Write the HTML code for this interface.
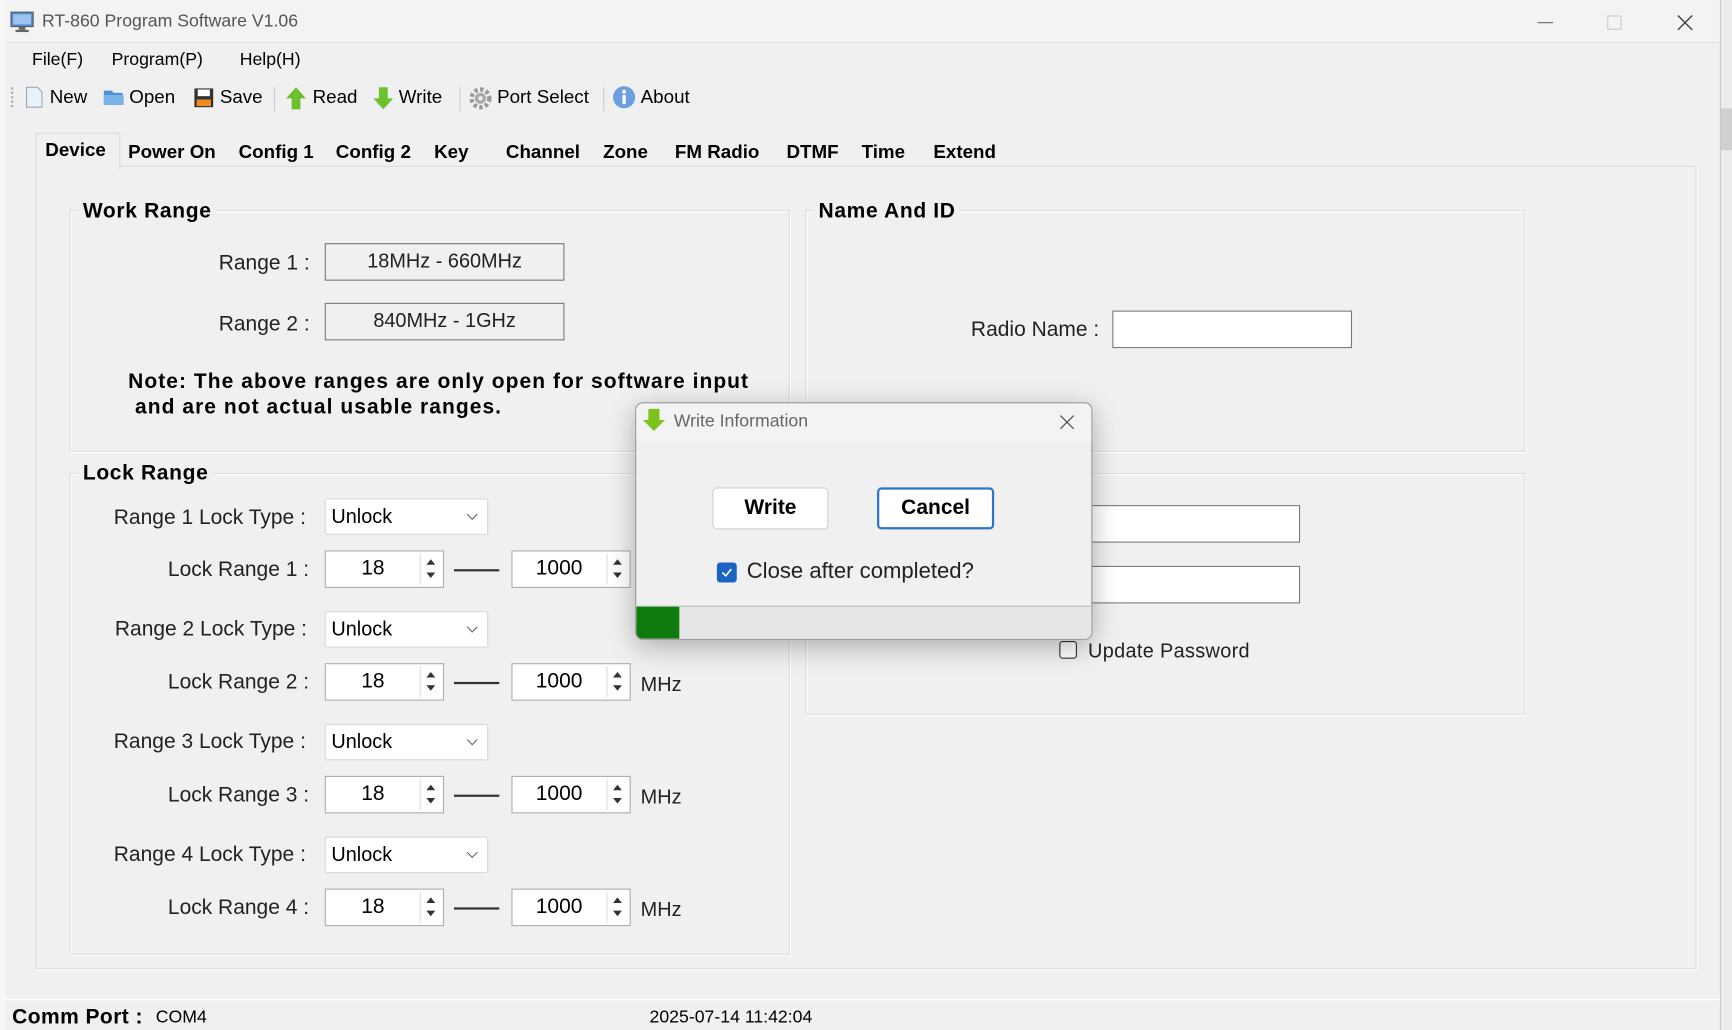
<!DOCTYPE html>
<html><head><meta charset="utf-8"><style>
html,body{margin:0;padding:0;width:1732px;height:1030px;overflow:hidden;background:#e8e8e8}
#s{position:absolute;left:0;top:0;width:1568px;height:932px;transform:scale(1.10459,1.1052);transform-origin:0 0;font-family:"Liberation Sans",Arial,sans-serif;color:#000}
.a{position:absolute}
.t{position:absolute;white-space:nowrap}
.gb{position:absolute;border:1px solid #dcdcdc;box-shadow:inset 1px 1px 0 #fff,1px 1px 0 #fff}
.gt{position:absolute;font-weight:bold;font-size:19px;background:#f0f0f0;padding:0 4px;letter-spacing:0.6px}
.box{position:absolute;background:#fff;border:1px solid #7a7a7a;box-sizing:border-box}
.cb{position:absolute;background:#fff;border:1px solid #d9d9d9;box-sizing:border-box;font-size:18px;padding:5px 0 0 5px;border-radius:2px}
.cb:after{content:"";position:absolute;right:10px;top:10px;width:6px;height:6px;border-right:1px solid #666;border-bottom:1px solid #666;transform:rotate(45deg)}
.sp{position:absolute;background:#fff;border:1px solid #acacac;box-sizing:border-box;font-size:19px;height:34px}
.sp .v{position:absolute;top:5px}
.sp .ar{position:absolute;right:2px;top:2px;width:18px;height:28px;border-left:1px solid #ddd}
.sp .ar:before{content:"";position:absolute;left:5px;top:5px;border:4px solid transparent;border-bottom:5px solid #333;border-top:0}
.sp .ar:after{content:"";position:absolute;left:5px;top:17px;border:4px solid transparent;border-top:5px solid #333;border-bottom:0}
.lbl{position:absolute;font-size:19px;color:#222;text-align:right;white-space:nowrap}
.tab{position:absolute;top:126px;height:24px;font-weight:bold;font-size:17px;padding-top:2px}
</style></head><body><div id="s">
<div class="a" style="left:0;top:0;width:5px;height:932px;background:#f7f7f7;border-right:1px solid #bbb"></div>
<div class="a" style="left:1557px;top:0;width:11px;height:932px;background:#ececec;border-left:1px solid #c8c8c8"></div>
<div class="a" style="left:1558px;top:98px;width:10px;height:38px;background:#d0d0d0"></div>
<div class="a" style="left:5px;top:0;width:1552px;height:932px;background:#f0f0f0"></div>
<div class="a" style="left:5px;top:0;width:1552px;height:38px;background:#f3f3f3;border-bottom:1px solid #e2e2e2"></div>
<svg class="a" style="left:9px;top:10px" width="22" height="20"><rect x="1" y="1" width="20" height="13" fill="#5b8fd6" stroke="#555"/><rect x="3" y="3" width="16" height="9" fill="#9cc4f0"/><rect x="8" y="14" width="6" height="3" fill="#666"/><rect x="5" y="17" width="12" height="2" fill="#666"/></svg>
<div class="t" style="left:38px;top:11px;font-size:16px;color:#555">RT-860 Program Software V1.06</div>
<div class="a" style="left:1392px;top:20px;width:14px;height:1px;background:#666"></div>
<div class="a" style="left:1455px;top:14px;width:11px;height:11px;border:1px solid #ccc"></div>
<svg class="a" style="left:1518px;top:13px" width="15" height="15"><path d="M1 1L14 14M14 1L1 14" stroke="#444" stroke-width="1.3"/></svg>
<div class="t" style="left:29px;top:46px;font-size:16px">File(F)</div>
<div class="t" style="left:101px;top:46px;font-size:16px">Program(P)</div>
<div class="t" style="left:217px;top:46px;font-size:16px">Help(H)</div>
<div class="a" style="left:10px;top:79px;width:2px;height:18px;border-left:2px dotted #aaa"></div>
<svg class="a" style="left:22px;top:78px" width="18" height="20"><path d="M2 1h10l4 4v14H2z" fill="#e8f2fb" stroke="#9ab"/></svg>
<div class="t" style="left:45px;top:78px;font-size:17px">New</div>
<svg class="a" style="left:93px;top:80px" width="20" height="16"><path d="M1 2h7l2 2h8v11H1z" fill="#4a90d9"/><path d="M1 6h18v9H1z" fill="#7bb2ea"/></svg>
<div class="t" style="left:117px;top:78px;font-size:17px">Open</div>
<svg class="a" style="left:175px;top:79px" width="19" height="19"><rect x="1" y="1" width="17" height="17" fill="#333"/><rect x="4" y="2" width="11" height="6" fill="#fff"/><rect x="3" y="11" width="13" height="6" fill="#f08a24"/></svg>
<div class="t" style="left:199px;top:78px;font-size:17px">Save</div>
<div class="a" style="left:248px;top:79px;width:1px;height:22px;background:#ccc"></div>
<svg class="a" style="left:258px;top:78px" width="20" height="22"><path d="M10 1L1 11h5v10h8V11h5z" fill="#6cc22e"/></svg>
<div class="t" style="left:283px;top:78px;font-size:17px">Read</div>
<svg class="a" style="left:337px;top:78px" width="20" height="22"><path d="M10 21L1 11h5V1h8v10h5z" fill="#6cc22e"/></svg>
<div class="t" style="left:361px;top:78px;font-size:17px">Write</div>
<div class="a" style="left:416px;top:79px;width:1px;height:22px;background:#ccc"></div>
<svg class="a" style="left:424px;top:78px" width="22" height="22"><circle cx="11" cy="11" r="8" fill="none" stroke="#999" stroke-width="4" stroke-dasharray="3 2.3"/><circle cx="11" cy="11" r="5" fill="#aaa"/><circle cx="11" cy="11" r="2" fill="#eee"/></svg>
<div class="t" style="left:450px;top:78px;font-size:17px">Port Select</div>
<div class="a" style="left:546px;top:79px;width:1px;height:22px;background:#ccc"></div>
<svg class="a" style="left:554px;top:77px" width="22" height="22"><circle cx="11" cy="11" r="10" fill="#6a9fe0"/><rect x="9.5" y="9" width="3" height="8" fill="#fff"/><circle cx="11" cy="6" r="1.8" fill="#fff"/></svg>
<div class="t" style="left:580px;top:78px;font-size:17px">About</div>
<div class="a" style="left:32px;top:150px;width:1502px;height:725px;border:1px solid #dcdcdc;background:#f0f0f0;box-shadow:1px 1px 0 #fff"></div>
<div class="a" style="left:32px;top:120px;width:75px;height:32px;background:#f0f0f0;border:1px solid #dcdcdc;border-bottom:none"></div>
<div class="tab" style="left:41px;top:124px">Device</div>
<div class="tab" style="left:116px">Power On</div>
<div class="tab" style="left:216px">Config 1</div>
<div class="tab" style="left:304px">Config 2</div>
<div class="tab" style="left:393px">Key</div>
<div class="tab" style="left:458px">Channel</div>
<div class="tab" style="left:546px">Zone</div>
<div class="tab" style="left:611px">FM Radio</div>
<div class="tab" style="left:712px">DTMF</div>
<div class="tab" style="left:780px">Time</div>
<div class="tab" style="left:845px">Extend</div>
<div class="gb" style="left:63px;top:190px;width:650px;height:217px"></div>
<div class="gt" style="left:71px;top:181px">Work Range</div>
<div class="lbl" style="left:198px;top:228px">Range 1 :</div>
<div class="box" style="left:294px;top:220px;width:217px;height:34px;background:#f0f0f0;font-size:18px;text-align:center;padding-top:5px;color:#222">18MHz - 660MHz</div>
<div class="lbl" style="left:198px;top:283px">Range 2 :</div>
<div class="box" style="left:294px;top:274px;width:217px;height:34px;background:#f0f0f0;font-size:18px;text-align:center;padding-top:5px;color:#222">840MHz - 1GHz</div>
<div class="t" style="left:116px;top:334px;font-size:19px;font-weight:bold;line-height:23px;letter-spacing:0.95px">Note: The above ranges are only open for software input<br>&nbsp;and are not actual usable ranges.</div>
<div class="gb" style="left:729px;top:190px;width:650px;height:217px"></div>
<div class="gt" style="left:737px;top:181px">Name And ID</div>
<div class="lbl" style="left:879px;top:288px">Radio Name :</div>
<div class="box" style="left:1007px;top:281px;width:217px;height:34px"></div>
<div class="gb" style="left:63px;top:428px;width:650px;height:434px"></div>
<div class="gt" style="left:71px;top:418px">Lock Range</div>
<div class="lbl" style="left:103px;top:458px">Range 1 Lock Type :</div>
<div class="cb" style="left:294px;top:451px;width:148px;height:33px">Unlock</div>
<div class="lbl" style="left:152px;top:505px">Lock Range 1 :</div>
<div class="sp" style="left:294px;top:498px;width:108px"><span class="v" style="left:32px">18</span><div class="ar"></div></div>
<div class="a" style="left:411px;top:515px;width:41px;height:2px;background:#333"></div>
<div class="sp" style="left:463px;top:498px;width:108px"><span class="v" style="left:21px">1000</span><div class="ar"></div></div>
<div class="lbl" style="left:104px;top:559px">Range 2 Lock Type :</div>
<div class="cb" style="left:294px;top:553px;width:148px;height:33px">Unlock</div>
<div class="lbl" style="left:152px;top:607px">Lock Range 2 :</div>
<div class="sp" style="left:294px;top:600px;width:108px"><span class="v" style="left:32px">18</span><div class="ar"></div></div>
<div class="a" style="left:411px;top:617px;width:41px;height:2px;background:#333"></div>
<div class="sp" style="left:463px;top:600px;width:108px"><span class="v" style="left:21px">1000</span><div class="ar"></div></div>
<div class="t" style="left:580px;top:609px;font-size:18px;color:#222">MHz</div>
<div class="lbl" style="left:103px;top:661px">Range 3 Lock Type :</div>
<div class="cb" style="left:294px;top:655px;width:148px;height:33px">Unlock</div>
<div class="lbl" style="left:152px;top:709px">Lock Range 3 :</div>
<div class="sp" style="left:294px;top:702px;width:108px"><span class="v" style="left:32px">18</span><div class="ar"></div></div>
<div class="a" style="left:411px;top:719px;width:41px;height:2px;background:#333"></div>
<div class="sp" style="left:463px;top:702px;width:108px"><span class="v" style="left:21px">1000</span><div class="ar"></div></div>
<div class="t" style="left:580px;top:711px;font-size:18px;color:#222">MHz</div>
<div class="lbl" style="left:103px;top:763px">Range 4 Lock Type :</div>
<div class="cb" style="left:294px;top:757px;width:148px;height:33px">Unlock</div>
<div class="lbl" style="left:152px;top:811px">Lock Range 4 :</div>
<div class="sp" style="left:294px;top:804px;width:108px"><span class="v" style="left:32px">18</span><div class="ar"></div></div>
<div class="a" style="left:411px;top:821px;width:41px;height:2px;background:#333"></div>
<div class="sp" style="left:463px;top:804px;width:108px"><span class="v" style="left:21px">1000</span><div class="ar"></div></div>
<div class="t" style="left:580px;top:813px;font-size:18px;color:#222">MHz</div>
<div class="gb" style="left:729px;top:428px;width:650px;height:217px"></div>
<div class="box" style="left:960px;top:457px;width:217px;height:34px"></div>
<div class="box" style="left:960px;top:512px;width:217px;height:34px"></div>
<div class="a" style="left:959px;top:580px;width:16px;height:16px;border:1px solid #333;border-radius:3px;background:#fff;box-sizing:border-box"></div>
<div class="t" style="left:985px;top:579px;font-size:18px;color:#222;letter-spacing:0.3px">Update Password</div>
<div class="a" style="left:5px;top:904px;width:1552px;height:1px;background:#fff"></div>
<div class="t" style="left:11px;top:910px;font-size:19px;font-weight:bold;letter-spacing:0.4px">Comm Port :</div>
<div class="t" style="left:141px;top:912px;font-size:16px">COM4</div>
<div class="t" style="left:588px;top:912px;font-size:16px">2025-07-14 11:42:04</div>
<div class="a" style="left:575px;top:364px;width:412px;height:213px;background:#f0f0f0;border:1px solid #9a9a9a;border-radius:7px;box-shadow:0 6px 24px rgba(0,0,0,.28);overflow:hidden">
 <div class="a" style="left:0;top:0;width:412px;height:34px;background:#f3f3f3"></div>
 <svg class="a" style="left:5px;top:4px" width="22" height="22"><path d="M11 21L1 11h5V1h10v10h5z" fill="#7cc21c"/></svg>
 <div class="t" style="left:34px;top:8px;font-size:16px;color:#666">Write Information</div>
 <svg class="a" style="left:383px;top:10px" width="14" height="14"><path d="M1 1L13 13M13 1L1 13" stroke="#555" stroke-width="1.2"/></svg>
 <div class="a" style="left:69px;top:76px;width:105px;height:38px;background:#fff;border:1px solid #d0d0d0;border-radius:4px;box-sizing:border-box;font-weight:bold;font-size:19px;text-align:center;padding-top:7px">Write</div>
 <div class="a" style="left:218px;top:76px;width:106px;height:38px;background:#fff;border:2px solid #2b74c8;border-radius:4px;box-sizing:border-box;font-weight:bold;font-size:19px;text-align:center;padding-top:6px">Cancel</div>
 <div class="a" style="left:73px;top:144px;width:18px;height:18px;background:#1a63c2;border-radius:3px"></div>
 <svg class="a" style="left:73px;top:144px" width="18" height="18"><path d="M5 9l3 3 5-6" fill="none" stroke="#fff" stroke-width="1.5"/></svg>
 <div class="t" style="left:100px;top:141px;font-size:20px;color:#222">Close after completed?</div>
 <div class="a" style="left:0;top:183px;width:412px;height:30px;background:#e6e6e6;border-top:1px solid #bcbcbc"></div>
 <div class="a" style="left:0;top:184px;width:39px;height:29px;background:#0f7b0f"></div>
</div>
</div></body></html>
